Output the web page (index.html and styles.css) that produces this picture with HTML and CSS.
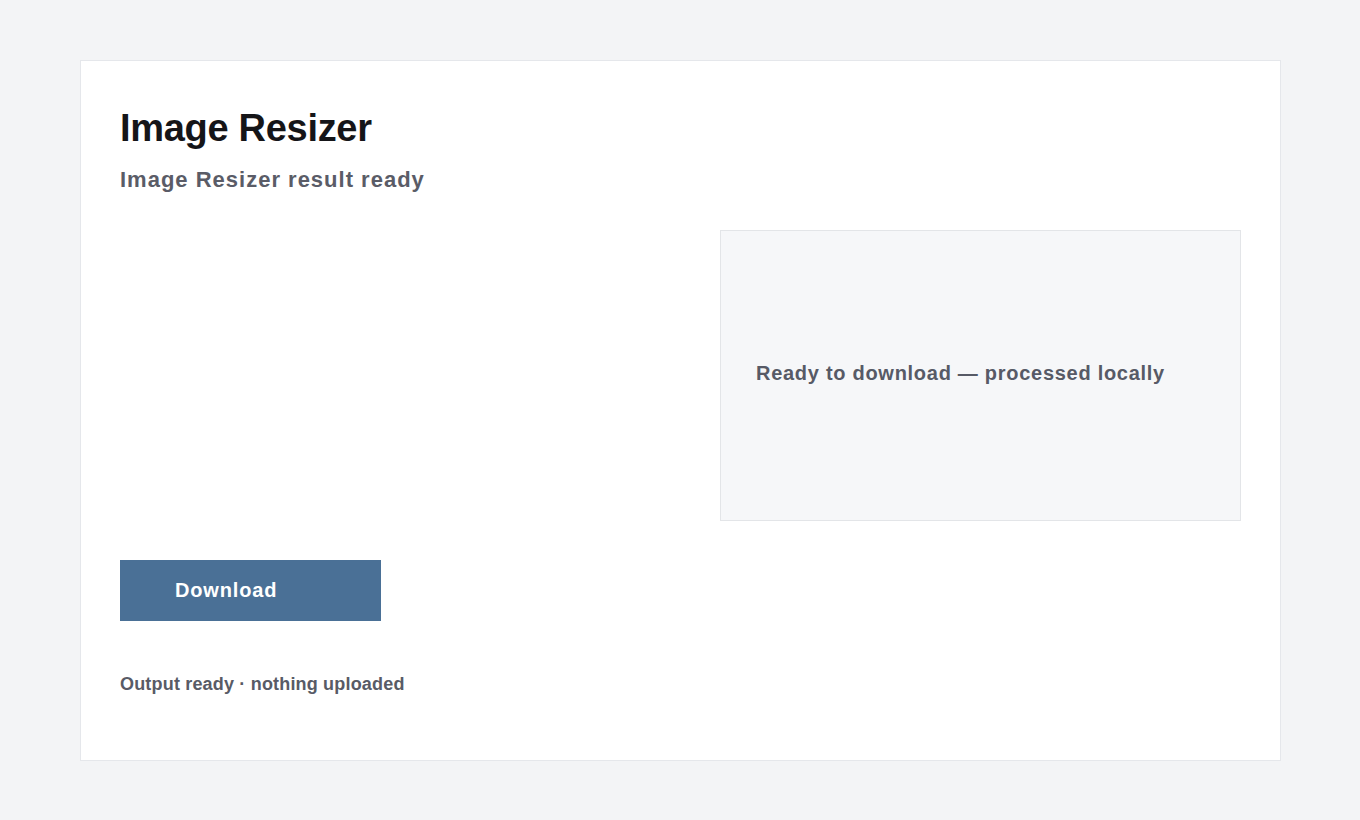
FILE: index.html
```html
<!DOCTYPE html>
<html lang="en">
<head>
    <meta charset="UTF-8">
    <meta name="viewport" content="width=device-width, initial-scale=1.0">
    <title>Image Resizer</title>
    <link rel="stylesheet" href="styles.css">
</head>
<body>
    <main class="card">
        <h1 class="title">Image Resizer</h1>
        <h2 class="subtitle">Image Resizer result ready</h2>
        <div class="result-grid">
            <div class="result-left"></div>
            <div class="preview">
                <p class="preview-text">Ready to download — processed locally</p>
            </div>
        </div>
        <button class="download-btn" type="button">Download</button>
        <p class="status">Output ready · nothing uploaded</p>
    </main>
</body>
</html>
```

FILE: styles.css
```css
/* Page */
body {
    margin: 0;
    padding: 60px 80px;
    background: #f3f4f6;
    font-family: 'Liberation Sans', Arial, sans-serif;
    color: #111111;
}

.card {
    box-sizing: border-box;
    width: 1201px;
    height: 701px;
    background: #ffffff;
    border: 1px solid #e5e7eb;
    padding: 39px;
}

.title {
    margin: 0;
    padding-top: 6px;
    font-size: 38px;
    font-weight: bold;
    line-height: 44px;
    letter-spacing: -0.3px;
    color: #151518;
}

.subtitle {
    margin: 17px 0 0;
    font-size: 22px;
    font-weight: bold;
    line-height: 26px;
    letter-spacing: 1px;
    color: #5a5c67;
}

.result-grid {
    display: grid;
    grid-template-columns: 1fr 521px;
    gap: 80px;
    margin-top: 37px;
}

.preview {
    box-sizing: border-box;
    height: 291px;
    background: #f6f7f9;
    border: 1px solid #e3e5e8;
    padding: 0 35px 5px;
    display: flex;
    align-items: center;
}

.preview-text {
    margin: 0;
    font-size: 20px;
    font-weight: bold;
    letter-spacing: 0.72px;
    color: #575a66;
}

.download-btn {
    display: block;
    margin-top: 39px;
    width: 261px;
    height: 61px;
    padding: 0 55px;
    border: none;
    background: #4a7096;
    color: #ffffff;
    font-family: inherit;
    font-size: 20px;
    font-weight: bold;
    letter-spacing: 0.85px;
    text-align: left;
    cursor: pointer;
}

.status {
    margin: 52px 0 0;
    font-size: 18px;
    font-weight: bold;
    line-height: 22px;
    letter-spacing: 0.18px;
    color: #585b66;
}
```
